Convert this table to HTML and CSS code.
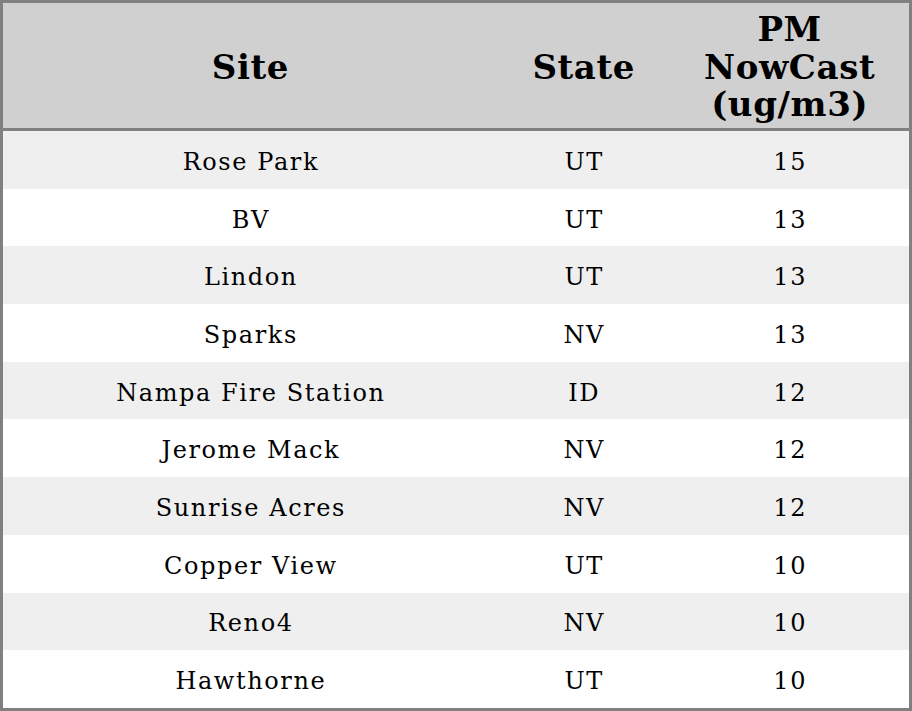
FILE: index.html
```html
<!DOCTYPE html>
<html>
<head>
<meta charset="utf-8">
<link rel="stylesheet" href="styles.css">
</head>
<body>
<table class="aq">
  <colgroup>
    <col class="c-site">
    <col class="c-state">
    <col class="c-pm">
  </colgroup>
  <thead>
    <tr><th>Site</th><th>State</th><th>PM<br>NowCast<br>(ug/m3)</th></tr>
  </thead>
  <tbody>
    <tr><td>Rose Park</td><td>UT</td><td>15</td></tr>
    <tr><td>BV</td><td>UT</td><td>13</td></tr>
    <tr><td>Lindon</td><td>UT</td><td>13</td></tr>
    <tr><td>Sparks</td><td>NV</td><td>13</td></tr>
    <tr><td>Nampa Fire Station</td><td>ID</td><td>12</td></tr>
    <tr><td>Jerome Mack</td><td>NV</td><td>12</td></tr>
    <tr><td>Sunrise Acres</td><td>NV</td><td>12</td></tr>
    <tr><td>Copper View</td><td>UT</td><td>10</td></tr>
    <tr><td>Reno4</td><td>NV</td><td>10</td></tr>
    <tr><td>Hawthorne</td><td>UT</td><td>10</td></tr>
  </tbody>
</table>
</body>
</html>
```
FILE: styles.css
```css
html, body {
  margin: 0;
  padding: 0;
  background: #ffffff;
}
.aq {
  width: 912px;
  height: 711px;
  border-collapse: collapse;
  border: 3px solid #808080;
  font-family: "DejaVu Serif", serif;
  color: #000;
  table-layout: fixed;
}
.c-site { width: 494px; }
.c-state { width: 172px; }
.c-pm { width: 240px; }
.aq th {
  background: #d0d0d0;
  font-size: 34px;
  font-weight: bold;
  letter-spacing: 0.6px;
  line-height: 37.5px;
  height: 121px;
  padding: 4px 0 0 0.6px;
  text-align: center;
  vertical-align: middle;
  border-bottom: 3px solid #808080;
}
.aq td {
  font-size: 24px;
  letter-spacing: 1.6px;
  height: 53px;
  padding: 4px 0 0 1.6px;
  text-align: center;
  vertical-align: middle;
}
.aq tbody tr:nth-child(odd) td { background: #efefef; }
.aq tbody tr:nth-child(even) td { background: #ffffff; }
```
